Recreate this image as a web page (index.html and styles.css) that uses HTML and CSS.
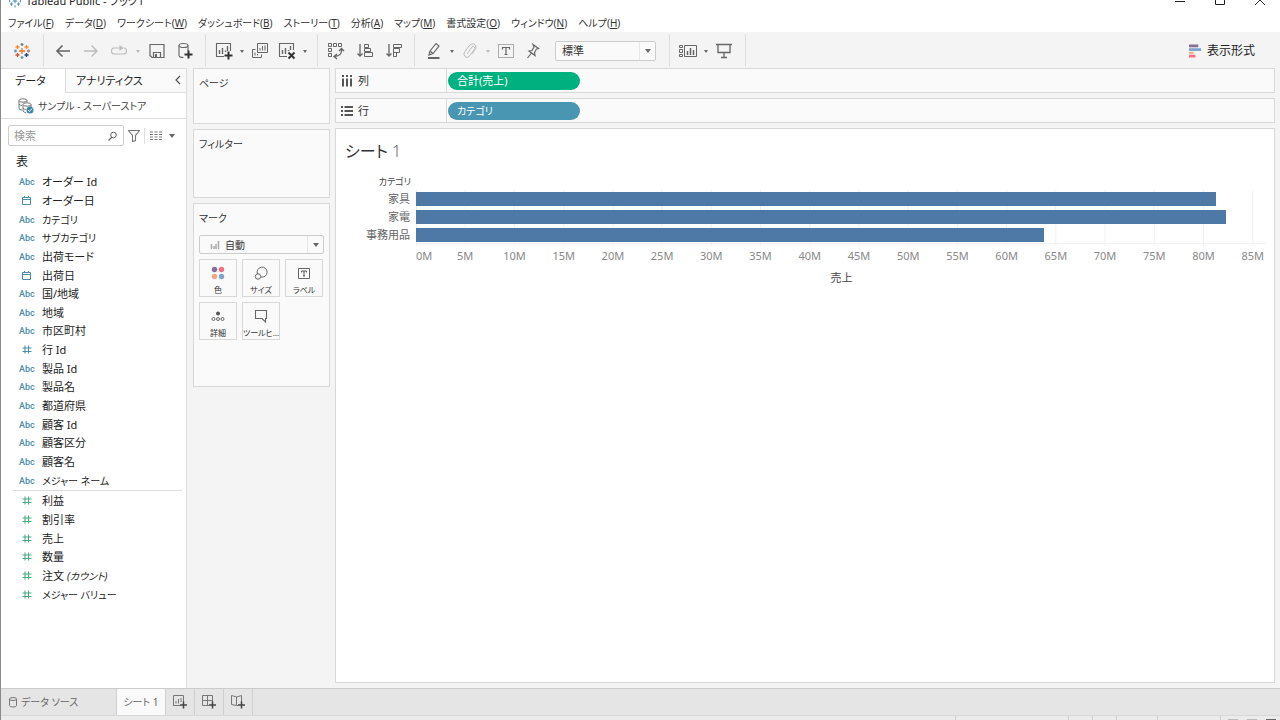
FILE: index.html
```html
<!DOCTYPE html>
<html lang="ja">
<head>
<meta charset="utf-8">
<title>Tableau Public - ブック1</title>
<link rel="stylesheet" href="styles.css">
</head>
<body>
<svg class="defs" aria-hidden="true">
  <symbol id="logo" viewBox="0 0 18 18"><g fill="none" stroke-width="1.3">
    <path stroke="#e8762d" d="M9 6v6M6 9h6"/><path stroke="#d9503f" d="M4.500 11v4M2.500 13h4"/><path stroke="#eb912c" d="M13.500 3v4M11.500 5h4M4.500 3v4M2.500 5h4"/>
    <path stroke="#5b879b" d="M9 1v3M7.500 2.500h3"/><path stroke="#1f447e" d="M13.500 11v4M11.500 13h4"/><path stroke="#c76f8d" d="M15.500 7.500v3M14 9h3"/>
    <path stroke="#7199a6" d="M2.500 7.500v3M1 9h3M9 14v3M7.500 15.500h3"/></g></symbol>
  <symbol id="blue-logo" viewBox="0 0 18 18"><path fill="none" stroke="#4a8fbd" stroke-width="1.300" d="M9 6v6M6 9h6M4.500 11v4M2.500 13h4M13.500 3v4M11.500 5h4M4.500 3v4M2.500 5h4M13.500 11v4M11.500 13h4M2 7.500v3M16 7.500v3M9 14.500v3"/></symbol>
  <symbol id="back" viewBox="0 0 18 18"><path d="M16 9H3M8.500 3.500 3 9l5.500 5.500" fill="none" stroke="currentColor" stroke-width="1.600"/></symbol>
  <symbol id="forward" viewBox="0 0 18 18"><path d="M2 9h13M9.500 3.500 15 9l-5.500 5.500" fill="none" stroke="currentColor" stroke-width="1.400"/></symbol>
  <symbol id="redo" viewBox="0 0 18 18"><path d="M11 6H4Q1.500 6 1.500 9T4 12h10q2.500 0 2.500-3T14 6" fill="none" stroke="currentColor" stroke-width="1.100"/><path d="m9.500 3 4 3-4 3z" fill="currentColor"/></symbol>
  <symbol id="save" viewBox="0 0 18 18"><g fill="none" stroke="currentColor" stroke-width="1.200"><path d="M2 2.500h14v13H4l-2-2z"/><path d="M5.500 15.500v-5h7v5"/></g><path d="M7 12h2v3H7z" fill="currentColor"/></symbol>
  <symbol id="database-add" viewBox="0 0 18 18"><g fill="none" stroke="currentColor" stroke-width="1.100"><ellipse cx="7.500" cy="3.500" rx="4.500" ry="2"/><path d="M3 3.500v10q0 2 4.500 2M12 3.500V9"/></g><path d="M12.500 8.500v8M8.500 12.500h8" stroke="#333" stroke-width="2"/></symbol>
  <symbol id="chart-add" viewBox="0 0 18 18"><path d="M9 14.500H1.500v-13h14V9" fill="none" stroke="currentColor" stroke-width="1.100"/><path d="M4.500 12V8M7.500 12V6M10.500 10V8.500M12.500 9V4" stroke="currentColor" stroke-width="1.400"/><path d="M13.500 9.500v8M9.500 13.500h8" stroke="#333" stroke-width="2"/></symbol>
  <symbol id="chart-copy" viewBox="0 0 18 18"><g fill="none" stroke="currentColor"><path d="M6.500 1.500h10v9h-10z"/><path d="M4.500 7.500h-3v8h9v-3"/><path d="M9 8.500V6M11.500 8.500V4M14 8.500V3.500M4 13.500v-3M6.500 13.500V12"/></g></symbol>
  <symbol id="chart-clear" viewBox="0 0 18 18"><path d="M9 14.500H1.500v-13h14V8" fill="none" stroke="currentColor" stroke-width="1.100"/><path d="M4.500 12V8M7.500 12V6M10.500 9V8M12.500 8V4" stroke="currentColor" stroke-width="1.400"/><path d="m10.500 10.500 6 6m0-6-6 6" stroke="#333" stroke-width="2"/></symbol>
  <symbol id="swap" viewBox="0 0 18 18"><g fill="none" stroke="currentColor"><path d="M1.500 1.500h3v3h-3zM6.500 1.500h3v3h-3zM11.500 1.500h3v3h-3zM1.500 6.500h3v3h-3zM1.500 11.500h3v3h-3z"/><path d="M14.500 7q1 7-7 7.500M12 9l2.500-2.500L17 9M10 12l-3 2.500 3 2.500" stroke-width="1.300"/></g></symbol>
  <symbol id="sort-asc" viewBox="0 0 18 18"><g fill="none" stroke="currentColor"><path d="M4 2v12M1.500 11.500 4 14l2.500-2.500" stroke-width="1.300"/><path d="M8.500 2.500h4v3h-4zM8.500 6.500h6v3h-6zM8.500 10.500h8v4h-8z"/></g></symbol>
  <symbol id="sort-desc" viewBox="0 0 18 18"><g fill="none" stroke="currentColor"><path d="M4 2v12M1.500 11.500 4 14l2.500-2.500" stroke-width="1.300"/><path d="M8.500 2.500h8v3h-8zM8.500 6.500h6v4h-6zM8.500 10.500h3v4h-3z"/></g></symbol>
  <symbol id="pencil" viewBox="0 0 18 18"><g fill="none" stroke="currentColor" stroke-width="1.200"><path d="m5 9 6-7.500 3 2.500-6 7.500-4 1.500zM5 9l3 2.500"/></g><path d="M3 16h11.500" stroke="currentColor" stroke-width="2"/></symbol>
  <symbol id="clip" viewBox="0 0 18 18"><path d="m6 12 5-7q1.500-1.500 2.500 0t-.5 3l-5 6.500q-2 2-4 0t-.5-4.500L8 4q2.500-3 5-2t2 4l-4 6" fill="none" stroke="currentColor"/></symbol>
  <symbol id="text-label" viewBox="0 0 18 18"><path d="M1.500 2.500h15v13h-15z" fill="none" stroke="currentColor" stroke-dasharray="1 1"/><path d="M5.500 7.500V5.500h7v2M9 5.500v7M7.500 12.500h3" fill="none" stroke="currentColor" stroke-width="1.200"/></symbol>
  <symbol id="pin" viewBox="0 0 18 18"><path d="m9 2.500 5.500 4-2 .5-2 3.500.500 3L5 9l3-.5L10 5zM7.500 11 3.500 16" fill="none" stroke="currentColor" stroke-width="1.200"/></symbol>
  <symbol id="cards" viewBox="0 0 18 18"><g fill="none" stroke="currentColor"><path d="M.5 3.500h3v2h-3zM.5 7.500h3v3h-3zM.5 12.500h3v2h-3zM5.500 3.500h12v11h-12z"/><path d="M8.500 13V9M11.500 13V6M14.500 13V8" stroke-width="1.500"/></g></symbol>
  <symbol id="present" viewBox="0 0 18 18"><path d="M1 2.500h16M3 3v7.500h12V3M9 10.500v5M6 15.500h6" fill="none" stroke="currentColor" stroke-width="1.300"/></symbol>
  <symbol id="show-me" viewBox="0 0 14 14"><path fill="#85709b" d="M0 0h10v3H0z"/><path fill="#7da5cf" d="M0 4h13v3H0z"/><path fill="#f4a57c" d="M0 8h5v2H0z"/><path fill="#fa6e82" d="M0 11h7v3H0z"/></symbol>
  <symbol id="source" viewBox="0 0 16 16"><g fill="none" stroke="#777"><ellipse cx="5" cy="2.500" rx="4" ry="1.700"/><path d="M1 2.500V10q0 2 3 2M1 6q1 1.500 3 1.500M9 2.500V4"/><ellipse cx="9" cy="6.500" rx="4" ry="1.700" fill="#fff"/><path d="M5 6.500V13q1 1.500 3 1.500M13 6.500V9M5 10q1 1.500 3 1.500"/></g><circle cx="12" cy="12" r="3.500" fill="#3b86a8"/><path d="m10 12 1.500 1.500 2.500-3" fill="none" stroke="#fff"/></symbol>
  <symbol id="search" viewBox="0 0 12 12"><path d="M6 7 2.500 10.500" stroke="#666" stroke-width="1.200"/><circle cx="7.500" cy="5" r="2.800" fill="none" stroke="#666"/></symbol>
  <symbol id="filter" viewBox="0 0 12 12"><path d="M.5.500h11L7.500 5.500v5l-3 1v-6z" fill="none" stroke="#777" stroke-width="1.100"/></symbol>
  <symbol id="list" viewBox="0 0 12 9"><path d="M0 1h12M0 3.500h12M0 6h12M0 8.500h12" stroke="#777" stroke-width="1.200" stroke-dasharray="3 1.500"/></symbol>
  <symbol id="calendar" viewBox="0 0 12 12"><path d="M1.500 2.500h8v7h-8zM1.500 4.500h8M3.500 1v2M7.500 1v2" fill="none" stroke="#4b8da8"/></symbol>
  <symbol id="number" viewBox="0 0 12 12"><path d="M4 1.500v8M7.500 1.500v8M1.500 4h9M1.500 7.500h9" fill="none" stroke="currentColor" stroke-width="1.100"/></symbol>
  <symbol id="columns" viewBox="0 0 12 12"><path d="M2 0v2M6 0v2M10 0v2M2 3.500v8M6 3.500v8M10 3.500v8" stroke="#555" stroke-width="2"/></symbol>
  <symbol id="rows" viewBox="0 0 12 12"><path d="M0 2h2M0 6h2M0 10h2M3.500 2H12M3.500 6H12M3.500 10H12" stroke="#555" stroke-width="2"/></symbol>
  <symbol id="bars" viewBox="0 0 10 10"><path d="M1.500 9V4M4 9V6M6 9V4M8.500 9V1" stroke="#aaa" stroke-width="1.500"/></symbol>
  <symbol id="color" viewBox="0 0 16 16"><circle cx="4.500" cy="4.500" r="2.700" fill="#85709b"/><circle cx="11.500" cy="4.500" r="2.700" fill="#fa6e82"/><circle cx="4.500" cy="11.500" r="2.700" fill="#f4a57c"/><circle cx="11.500" cy="11.500" r="2.700" fill="#7da5cf"/></symbol>
  <symbol id="size" viewBox="0 0 16 16"><g fill="none" stroke="#666"><path d="M4.500 9A5 5 0 1 1 8 12"/><circle cx="5" cy="11.500" r="2.700"/></g></symbol>
  <symbol id="label" viewBox="0 0 16 16"><path d="M2.500 3.500h11v10h-11z" fill="none" stroke="#666"/><path d="M5.500 7.500V6h5v1.500M8 6v5M7 11h2" fill="none" stroke="#555"/></symbol>
  <symbol id="detail" viewBox="0 0 16 16"><circle cx="8" cy="5.500" r="2" fill="#555"/><g fill="none" stroke="#666"><circle cx="3.500" cy="11" r="1.500"/><circle cx="8" cy="11" r="1.500"/><circle cx="12.500" cy="11" r="1.500"/></g></symbol>
  <symbol id="tooltip" viewBox="0 0 16 16"><path d="M2.500 2.500h11v8h-1v3.500l-3.500-3.500H2.500z" fill="none" stroke="#666" stroke-width="1.100"/></symbol>
  <symbol id="cylinder" viewBox="0 0 10 12"><path d="M1.500 3v6.500q0 1.500 3.500 1.500t3.500-1.500V3M1.500 3q0-1.500 3.500-1.500T8.500 3 5 4.500 1.500 3" fill="none" stroke="#777"/></symbol>
  <symbol id="tab-sheet" viewBox="0 0 14 14"><path d="M7 10.500H.5V.5h10V7M3 8.500V6M5.500 8.500V4M8 7V3" fill="none" stroke="#777"/><path d="M10.500 6.500v7M7 10h7" stroke="#444" stroke-width="1.500"/></symbol>
  <symbol id="tab-dashboard" viewBox="0 0 14 14"><path d="M7 10.500H.5V.5h10V7M5.500.500v10M.5 5.500h10" fill="none" stroke="#777"/><path d="M10.500 6.500v7M7 10h7" stroke="#444" stroke-width="1.500"/></symbol>
  <symbol id="tab-story" viewBox="0 0 14 14"><path d="M7 10.500H5.500L.5 9.500V.5l5 1.500 5-1.500V7M5.500 2v8.500" fill="none" stroke="#777"/><path d="M10.500 6.500v7M7 10h7" stroke="#444" stroke-width="1.500"/></symbol>
</svg>

<div class="app">
  <header class="titlebar">
    <svg class="titlebar-logo"><use href="#blue-logo"/></svg>
    <span class="titlebar-name">Tableau Public - ブック1</span>
    <button class="window-button" aria-label="最小化"><svg viewBox="0 0 10 10"><path d="M0 6.500h10" stroke="#222" fill="none"/></svg></button>
    <button class="window-button" aria-label="最大化"><svg viewBox="0 0 10 10"><path d="M.5.500h9v9h-9z" stroke="#222" fill="none"/></svg></button>
    <button class="window-button" aria-label="閉じる"><svg viewBox="0 0 10 10"><path d="m0 0 10 10M10 0 0 10" stroke="#222" fill="none"/></svg></button>
  </header>

  <nav class="menubar">
    <button>ファイル(<u>F</u>)</button><button>データ(<u>D</u>)</button><button>ワークシート(<u>W</u>)</button><button>ダッシュボード(<u>B</u>)</button><button>ストーリー(<u>T</u>)</button><button>分析(<u>A</u>)</button><button>マップ(<u>M</u>)</button><button>書式設定(<u>O</u>)</button><button>ウィンドウ(<u>N</u>)</button><button>ヘルプ(<u>H</u>)</button>
  </nav>

  <div class="toolbar">
    <div class="tools tools-logo"><button class="tool" aria-label="スタートページ"><svg><use href="#logo"/></svg></button></div>
    <div class="tools tools-history">
      <button class="tool" aria-label="元に戻す"><svg><use href="#back"/></svg></button>
      <button class="tool disabled" aria-label="やり直す"><svg><use href="#forward"/></svg></button>
      <button class="tool disabled" aria-label="繰り返し"><svg><use href="#redo"/></svg></button>
      <button class="caret disabled" aria-label="繰り返しのメニュー"></button>
      <button class="tool" aria-label="保存"><svg><use href="#save"/></svg></button>
      <button class="tool" aria-label="新しいデータ ソース"><svg><use href="#database-add"/></svg></button>
    </div>
    <div class="tools">
      <button class="tool" aria-label="新しいワークシート"><svg><use href="#chart-add"/></svg></button>
      <button class="caret" aria-label="新規メニュー"></button>
      <button class="tool" aria-label="複製"><svg><use href="#chart-copy"/></svg></button>
      <button class="tool" aria-label="シートのクリア"><svg><use href="#chart-clear"/></svg></button>
      <button class="caret" aria-label="クリア メニュー"></button>
    </div>
    <div class="tools tools-sort">
      <button class="tool" aria-label="行と列の交換"><svg><use href="#swap"/></svg></button>
      <button class="tool" aria-label="昇順で並べ替え"><svg><use href="#sort-asc"/></svg></button>
      <button class="tool" aria-label="降順で並べ替え"><svg><use href="#sort-desc"/></svg></button>
    </div>
    <div class="tools tools-format">
      <button class="tool" aria-label="ハイライト"><svg><use href="#pencil"/></svg></button>
      <button class="caret" aria-label="ハイライト メニュー"></button>
      <button class="tool disabled" aria-label="グループ"><svg><use href="#clip"/></svg></button>
      <button class="caret disabled" aria-label="グループ メニュー"></button>
      <button class="tool" aria-label="マーク ラベルの表示"><svg><use href="#text-label"/></svg></button>
      <button class="tool" aria-label="軸の固定"><svg><use href="#pin"/></svg></button>
      <div class="select fit-select"><select aria-label="表示サイズ"><option>標準</option></select></div>
    </div>
    <div class="tools">
      <button class="tool" aria-label="カードの表示"><svg><use href="#cards"/></svg></button>
      <button class="caret" aria-label="カード メニュー"></button>
      <button class="tool" aria-label="プレゼンテーション モード"><svg><use href="#present"/></svg></button>
    </div>
    <button class="show-me"><svg><use href="#show-me"/></svg>表示形式</button>
  </div>

  <main class="workspace">
    <aside class="data-pane">
      <div class="pane-tabs">
        <button class="pane-tab active">データ</button>
        <button class="pane-tab">アナリティクス</button>
        <button class="collapse" aria-label="折りたたむ"><svg viewBox="0 0 6 10"><path d="M5 1 1 5l4 4" fill="none" stroke="#555" stroke-width="1.200"/></svg></button>
      </div>
      <button class="source"><svg><use href="#source"/></svg>サンプル - スーパーストア</button>
      <div class="search-row">
        <div class="search"><input type="text" placeholder="検索" aria-label="検索"><svg><use href="#search"/></svg></div>
        <button class="filter-button" aria-label="フィルター"><svg><use href="#filter"/></svg></button>
        <button class="view-button" aria-label="表示方法"><svg><use href="#list"/></svg><span class="triangle"></span></button>
      </div>
      <h2 class="table-heading">表</h2>
      <ul class="fields dimensions">
        <li><span class="abc">Abc</span>オーダー Id</li>
        <li><svg><use href="#calendar"/></svg>オーダー日</li>
        <li><span class="abc">Abc</span><span class="kana">カテゴリ</span></li>
        <li><span class="abc">Abc</span><span class="kana">サブカテゴリ</span></li>
        <li><span class="abc">Abc</span>出荷モード</li>
        <li><svg><use href="#calendar"/></svg>出荷日</li>
        <li><span class="abc">Abc</span>国/地域</li>
        <li><span class="abc">Abc</span>地域</li>
        <li><span class="abc">Abc</span>市区町村</li>
        <li><svg><use href="#number"/></svg>行 Id</li>
        <li><span class="abc">Abc</span>製品 Id</li>
        <li><span class="abc">Abc</span>製品名</li>
        <li><span class="abc">Abc</span>都道府県</li>
        <li><span class="abc">Abc</span>顧客 Id</li>
        <li><span class="abc">Abc</span>顧客区分</li>
        <li><span class="abc">Abc</span>顧客名</li>
        <li><span class="abc">Abc</span><span class="kana">メジャー ネーム</span></li>
      </ul>
      <ul class="fields measures">
        <li><svg><use href="#number"/></svg>利益</li>
        <li><svg><use href="#number"/></svg>割引率</li>
        <li><svg><use href="#number"/></svg>売上</li>
        <li><svg><use href="#number"/></svg>数量</li>
        <li><svg><use href="#number"/></svg><span>注文 <i class="kana">(カウント)</i></span></li>
        <li><svg><use href="#number"/></svg><span class="kana">メジャー バリュー</span></li>
      </ul>
    </aside>

    <div class="cards">
      <section class="card pages"><h3>ページ</h3></section>
      <section class="card filters"><h3>フィルター</h3></section>
      <section class="card marks">
        <h3>マーク</h3>
        <div class="select mark-select"><svg><use href="#bars"/></svg><select aria-label="マークの種類"><option>自動</option></select></div>
        <div class="mark-grid">
          <button><svg><use href="#color"/></svg>色</button>
          <button><svg><use href="#size"/></svg>サイズ</button>
          <button><svg><use href="#label"/></svg>ラベル</button>
          <button><svg><use href="#detail"/></svg>詳細</button>
          <button><svg><use href="#tooltip"/></svg>ツールヒ…</button>
        </div>
      </section>
    </div>

    <div class="view">
      <div class="shelf"><div class="shelf-name"><svg><use href="#columns"/></svg>列</div><button class="pill measure">合計(売上)</button></div>
      <div class="shelf"><div class="shelf-name"><svg><use href="#rows"/></svg>行</div><button class="pill dimension">カテゴリ</button></div>
      <section class="sheet">
        <h1>シート <span>1</span></h1>
        <div class="chart">
          <div class="row-header">カテゴリ</div>
          <div class="row-labels"><span>家具</span><span>家電</span><span>事務用品</span></div>
          <div class="plot">
            <svg class="gridlines" aria-hidden="true"><g stroke="#f1f1f1"><path d="M.5 0v56"/><line x1="5.780%" x2="5.780%" y2="56"/><line x1="11.570%" x2="11.570%" y2="56"/><line x1="17.350%" x2="17.350%" y2="56"/><line x1="23.140%" x2="23.140%" y2="56"/><line x1="28.920%" x2="28.920%" y2="56"/><line x1="34.700%" x2="34.700%" y2="56"/><line x1="40.490%" x2="40.490%" y2="56"/><line x1="46.270%" x2="46.270%" y2="56"/><line x1="52.050%" x2="52.050%" y2="56"/><line x1="57.840%" x2="57.840%" y2="56"/><line x1="63.620%" x2="63.620%" y2="56"/><line x1="69.400%" x2="69.400%" y2="56"/><line x1="75.190%" x2="75.190%" y2="56"/><line x1="80.970%" x2="80.970%" y2="56"/><line x1="86.760%" x2="86.760%" y2="56"/><line x1="92.540%" x2="92.540%" y2="56"/><line x1="98.320%" x2="98.320%" y2="56"/><line x2="100%" y1="53.500" y2="53.500"/></g></svg>
            <div class="bar" style="width:93.950%"></div>
            <div class="bar" style="width:95.200%"></div>
            <div class="bar" style="width:73.750%"></div>
          </div>
          <div class="axis"><span>0M</span><span>5M</span><span>10M</span><span>15M</span><span>20M</span><span>25M</span><span>30M</span><span>35M</span><span>40M</span><span>45M</span><span>50M</span><span>55M</span><span>60M</span><span>65M</span><span>70M</span><span>75M</span><span>80M</span><span>85M</span></div>
          <div class="axis-title">売上</div>
        </div>
      </section>
    </div>
  </main>

  <nav class="sheet-tabs">
    <button class="data-source-tab"><svg><use href="#cylinder"/></svg>データ ソース</button>
    <button class="sheet-tab">シート 1</button>
    <button class="new-tab" aria-label="新しいワークシート"><svg><use href="#tab-sheet"/></svg></button>
    <button class="new-tab" aria-label="新しいダッシュボード"><svg><use href="#tab-dashboard"/></svg></button>
    <button class="new-tab" aria-label="新しいストーリー"><svg><use href="#tab-story"/></svg></button>
  </nav>
  <footer class="statusbar"><span class="cell wide"></span><span class="cell"></span><span class="cell"></span><span class="cell medium"></span><span class="cell large"></span><span class="cell view-modes"><i></i><i></i><i class="current"></i></span></footer>
</div>
</body>
</html>
```
FILE: styles.css
```css
* { box-sizing: border-box; }
body {
  margin: 0;
  font: 11px/16px "Noto Sans", "Noto Sans CJK JP", sans-serif;
  font-feature-settings: "palt";
  color: #333;
}
button, input, select { font: inherit; font-feature-settings: inherit; color: inherit; }
button { padding: 0; border: 0; background: none; white-space: nowrap; }
h1, h2, h3, ul { margin: 0; padding: 0; font-weight: 400; }
ul { list-style: none; }
svg { display: block; flex: none; }
.defs { position: absolute; width: 0; height: 0; }

.app {
  display: flex;
  flex-direction: column;
  height: 100vh;
  overflow: hidden;
  border-left: 1px solid #8a8a8a;
  background: #f4f4f4;
}

.titlebar {
  display: flex;
  align-items: flex-end;
  height: 9px;
  overflow: hidden;
  background: #fff;
}
.titlebar-logo { width: 14px; height: 14px; margin: 0 4px 1px 7px; }
.titlebar-name { flex: 1; color: #222; }
.window-button { width: 40px; height: 14px; display: flex; justify-content: center; }
.window-button svg { width: 10px; height: 10px; }

.menubar {
  display: flex;
  gap: 11px;
  padding: 6px 0 1px 7px;
  background: #fff;
  font-size: 10px;
}
.menubar u { text-underline-offset: 1px; }

.toolbar { display: flex; align-items: center; height: 36px; flex: none; }
.tools {
  display: flex;
  align-items: center;
  gap: 1px;
  height: 32px;
  padding: 2px 8px 0 5px;
  border-right: 1px solid #ddd;
}
.tools-logo { padding-left: 8px; }
.tools-history { padding-left: 6px; padding-right: 7px; gap: 2px; }
.tools-sort { gap: 3px; padding-right: 7px; }
.tools-format { padding-right: 13px; padding-left: 6px; }
.tool {
  display: flex;
  align-items: center;
  justify-content: center;
  width: 26px;
  height: 26px;
  color: #666;
}
.tool svg { width: 18px; height: 18px; }
.tool.disabled { color: #bbb; }
.caret { display: flex; justify-content: center; width: 8px; }
.caret::before, .triangle {
  content: "";
  border: 2px solid transparent;
  border-top: 3px solid #666;
  border-bottom: 0;
}
.triangle { border-width: 4px 3px 0; }
.caret.disabled::before { border-top-color: #bbb; }
.select {
  display: flex;
  align-items: center;
  position: relative;
  border: 1px solid #ccc;
  border-radius: 2px;
  background: #fafafa;
}
.select select {
  flex: 1;
  height: 100%;
  padding: 0 6px;
  border: 0;
  appearance: none;
  background: none;
}
.select::before {
  content: "";
  position: absolute;
  right: 15px;
  top: 0;
  bottom: 0;
  border-right: 1px solid #e8e8e8;
}
.select::after {
  content: "";
  position: absolute;
  right: 4px;
  border: 3px solid transparent;
  border-top: 4px solid #666;
  border-bottom: 0;
}
.fit-select { width: 101px; height: 20px; margin-left: 8px; }
.show-me { display: flex; align-items: center; gap: 5px; margin: 0 25px 0 auto; padding-top: 1px; font-size: 12px; color: #222; }
.show-me svg { width: 13px; height: 14px; }

.workspace { flex: 1; display: flex; gap: 6px; min-height: 0; padding-right: 5px; }
.data-pane {
  flex: none;
  width: 186px;
  background: #fff;
  border: solid #ddd;
  border-width: 1px 1px 0 0;
}
.pane-tabs { display: flex; height: 24px; }
.pane-tab { padding: 0 10px; border-bottom: 1px solid #ddd; background: #fafafa; color: #222; }
.pane-tab.active { width: 65px; padding: 0 14px; text-align: left; border-right: 1px solid #ddd; border-bottom: 0; background: #fff; }
.collapse { display: flex; justify-content: flex-end; padding: 6px 5px 0 0; flex: 1; border-bottom: 1px solid #ddd; background: #fafafa; }
.collapse svg { width: 6px; height: 10px; }
.source {
  display: flex;
  align-items: center;
  gap: 4px;
  width: 100%;
  height: 26px;
  padding-left: 17px;
  border-bottom: 1px solid #ddd;
  font-size: 10px;
  color: #444;
}
.source svg { width: 16px; height: 16px; }
.search-row { display: flex; align-items: center; padding: 6px 0 0 7px; }
.search {
  display: flex;
  align-items: center;
  width: 116px;
  height: 21px;
  padding: 0 5px;
  border: 1px solid #ccc;
  border-radius: 2px;
}
.search input { flex: 1; min-width: 0; padding: 0; border: 0; outline: 0; background: none; }
.search input::placeholder { color: #999; }
.search svg { width: 12px; height: 12px; }
.filter-button { display: flex; justify-content: center; width: 21px; padding: 2px 0; border-right: 1px solid #ddd; }
.filter-button svg { width: 12px; height: 12px; }
.view-button { display: flex; align-items: center; gap: 7px; padding-left: 5px; }
.view-button svg { width: 12px; height: 9px; }
.table-heading { padding: 8px 0 3px 15px; font-size: 12px; line-height: 16px; color: #222; }
.fields { display: grid; grid-auto-rows: 1fr; margin: 0 4px 0 12px; }
.fields li { display: grid; grid-template-columns: 28px 1fr; align-items: center; padding-left: 1px; color: #222; }
.fields svg { width: 12px; height: 12px; margin-left: 7px; color: #4b8da8; }
.dimensions { height: 318px; border-bottom: 1px solid #ddd; }
.measures { height: 113px; padding-top: 1px; }
.measures svg { color: #4bab83; }
.kana { font-size: 10px; }
.abc { padding-left: 5px; font: 500 9px/14px Roboto, sans-serif; color: #4b8da8; }

.cards { flex: none; width: 137px; display: flex; flex-direction: column; gap: 5px; }
.card { padding: 6px 5px; border: 1px solid #d8d8d8; background: #fafafa; }
.card h3 { font-size: 10px; line-height: 16px; }
.pages { min-height: 56px; }
.filters { min-height: 69px; }
.marks { min-height: 184px; }
.mark-select { height: 19px; margin-top: 9px; }
.mark-select svg { width: 10px; height: 10px; margin-left: 10px; }
.mark-select select { font-size: 10px; padding-left: 5px; }
.mark-grid { display: grid; grid-template-columns: repeat(3, 38px); gap: 5px; padding-top: 5px; }
.mark-grid button {
  display: flex;
  flex-direction: column;
  align-items: center;
  gap: 2px;
  height: 38px;
  padding-top: 5px;
  border: 1px solid #d8d8d8;
  font-size: 8px;
  line-height: 14px;
}
.mark-grid svg { width: 16px; height: 16px; }

.view { flex: 1; min-width: 0; display: flex; flex-direction: column; gap: 5px; padding-bottom: 5px; margin-left: -1px; }
.shelf { display: flex; align-items: center; height: 25px; border: 1px solid #d8d8d8; background: #fafafa; }
.shelf-name {
  display: flex;
  align-items: center;
  gap: 5px;
  width: 111px;
  height: 100%;
  padding-left: 5px;
  border-right: 1px solid #d8d8d8;
}
.shelf-name svg { width: 12px; height: 12px; }
.pill { width: 132px; height: 18px; margin-left: 1px; padding-left: 9px; border-radius: 9px; color: #fff; text-align: left; line-height: 18px; }
.measure { background: #00b180; }
.dimension { background: #4996b2; font-size: 10px; }
.sheet { flex: 1; overflow: hidden; padding: 10px 7px 0 0; border: 1px solid #d8d8d8; background: #fff; }
.sheet h1 { padding-left: 9px; font-size: 16px; line-height: 24px; }
.sheet h1 span { color: #666; font-weight: 300; }
.chart { display: grid; grid-template-columns: 80px minmax(0, 1fr); padding-top: 11px; color: #666; }
.row-header { padding-right: 5px; text-align: right; font-size: 9px; color: #444; }
.row-labels { grid-row: 2; display: grid; grid-auto-rows: 18px; padding-right: 6px; text-align: right; line-height: 18px; }
.plot { grid-area: 2 / 2; position: relative; height: 58px; padding-top: 2px; display: flex; flex-direction: column; gap: 4px; }
.gridlines { position: absolute; inset: 0; width: 100%; height: 100%; }
.bar { position: relative; height: 14px; background: #4e79a7; }
.axis { grid-area: 3 / 2; display: flex; color: #888; }
.axis span { flex: 0 0 5.784%; text-align: center; }
.axis span:first-child { flex-basis: 2.892%; text-align: left; }
.axis-title { grid-area: 4 / 2; padding-top: 6px; text-align: center; color: #444; }

.sheet-tabs { flex: none; display: flex; height: 27px; border-top: 1px solid #ccc; background: #e5e5e5; color: #666; font-size: 10px; }
.sheet-tabs button { display: flex; align-items: center; border-right: 1px solid #d0d0d0; }
.data-source-tab { width: 116px; gap: 3px; padding-left: 7px; }
.data-source-tab svg { width: 10px; height: 12px; }
.sheet-tabs .sheet-tab { width: 49px; justify-content: center; background: #fafafa; }
.sheet-tabs .new-tab { width: 29px; justify-content: center; }
.new-tab svg { width: 14px; height: 14px; }
.statusbar { flex: none; display: flex; justify-content: flex-end; height: 5px; border-top: 1px solid #d8d8d8; background: #ebebeb; }
.cell { width: 24px; border-left: 1px solid #ccc; }
.cell.wide { width: 113px; }
.cell.medium { width: 41px; }
.cell.large { width: 63px; }
.cell.view-modes { width: 60px; display: flex; align-items: flex-end; gap: 9px; padding-left: 7px; }
.view-modes i { width: 10px; height: 1px; background: #bbb; }
.view-modes .current { background: #666; }
```
